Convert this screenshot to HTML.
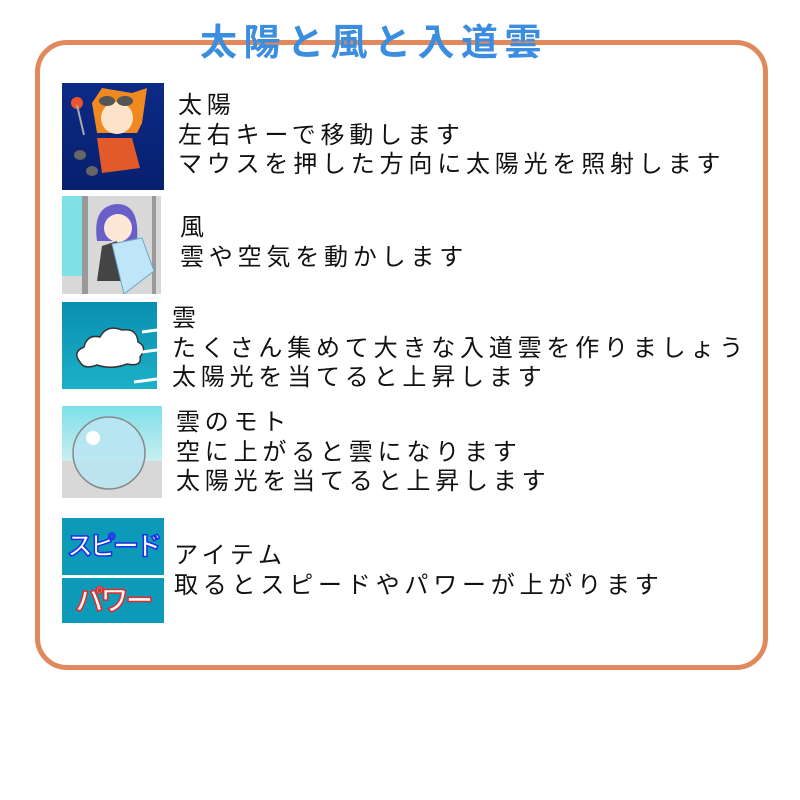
<!DOCTYPE html>
<html><head><meta charset="utf-8"><style>
body{margin:0;width:800px;height:800px;background:#fff;position:relative;overflow:hidden;font-family:"Liberation Sans","Noto Sans CJK JP",sans-serif}
.box{position:absolute;left:35px;top:40px;width:723px;height:620px;border:5px solid #e0895c;border-radius:32px}
.title{position:absolute;left:200px;top:18px;color:#3b8ddf;font-size:37px;font-weight:bold;letter-spacing:6.5px;line-height:50px;white-space:nowrap}
.t{position:absolute;font-size:24px;letter-spacing:4.8px;line-height:29.5px;color:#111;white-space:nowrap}
.im{position:absolute;overflow:hidden}
.btn{white-space:nowrap;color:#fff;font-weight:bold;text-align:center;letter-spacing:-3px}
</style></head><body>
<div class="box"></div>
<div class="title">太陽と風と入道雲</div>

<div class="im" style="left:62px;top:83px;width:102px;height:107px;background:linear-gradient(#0d2a86,#06206e)">
<svg width="102" height="107"><circle cx="15" cy="20" r="6" fill="#e8562a"/><line x1="15" y1="22" x2="22" y2="52" stroke="#aaa" stroke-width="2"/>
<path d="M30 20 L40 5 L70 10 L85 5 L80 40 L75 50 L35 50 Z" fill="#f08a20"/><circle cx="55" cy="35" r="16" fill="#fde3c8"/>
<ellipse cx="45" cy="18" rx="8" ry="5" fill="#555"/><ellipse cx="63" cy="18" rx="8" ry="5" fill="#555"/>
<path d="M35 55 L70 55 L78 85 L40 90 Z" fill="#e25a2a"/><ellipse cx="18" cy="72" rx="6" ry="5" fill="#666"/><ellipse cx="30" cy="88" rx="6" ry="5" fill="#666"/></svg></div>

<div class="im" style="left:62px;top:196px;width:99px;height:98px;background:#d8d8d8">
<svg width="99" height="98"><rect x="0" y="0" width="20" height="80" fill="#7fe0e6"/><rect x="20" y="0" width="6" height="98" fill="#999"/><rect x="90" y="0" width="4" height="98" fill="#999"/>
<path d="M35 45 Q30 10 55 8 Q78 8 75 45 Z" fill="#6a5fc8"/><circle cx="56" cy="32" r="14" fill="#fde8d8"/>
<path d="M40 50 L55 45 L60 85 L35 85 Z" fill="#444"/><path d="M50 48 L80 42 L92 75 L62 98 Z" fill="#bfe6f8" stroke="#6aa8c8"/></svg></div>

<div class="im" style="left:62px;top:302px;width:95px;height:87px;background:linear-gradient(#0a8fb0,#1cb0c8)">
<svg width="95" height="87"><path d="M18 60 Q10 50 22 45 Q25 32 38 35 Q45 22 60 28 Q75 26 76 40 Q86 45 78 55 Q80 65 65 62 Q50 68 35 63 Q22 68 18 60Z" fill="#fff" stroke="#333" stroke-width="1.5"/>
<path d="M80 30 L95 28 M80 50 L95 48 M72 80 L95 77" stroke="#fff" stroke-width="3"/></svg></div>

<div class="im" style="left:62px;top:406px;width:100px;height:92px;background:linear-gradient(#7ee0e8,#c8eef0 60%,#d8d8d8 60%)">
<svg width="100" height="92"><circle cx="47" cy="47" r="36" fill="#b8e6f2" fill-opacity="0.9" stroke="#888" stroke-width="1.5"/><circle cx="31" cy="32" r="7" fill="#fff"/></svg></div>

<div class="im btn" style="left:62px;top:518px;width:102px;height:57px;background:#0d9ab8;font-size:26px;line-height:57px;-webkit-text-stroke:1.5px #1b2fe8">スピード</div>
<div class="im btn" style="left:62px;top:578px;width:102px;height:45px;background:#0d9ab8;font-size:28px;line-height:45px;-webkit-text-stroke:1.5px #e82a2a">パワー</div>

<div class="t" style="left:178px;top:91px">太陽<br>左右キーで移動します<br>マウスを押した方向に太陽光を照射します</div>
<div class="t" style="left:180px;top:213px">風<br>雲や空気を動かします</div>
<div class="t" style="left:172px;top:304px">雲<br>たくさん集めて大きな入道雲を作りましょう<br>太陽光を当てると上昇します</div>
<div class="t" style="left:176px;top:408px">雲のモト<br>空に上がると雲になります<br>太陽光を当てると上昇します</div>
<div class="t" style="left:174px;top:541px">アイテム<br>取るとスピードやパワーが上がります</div>
</body></html>
